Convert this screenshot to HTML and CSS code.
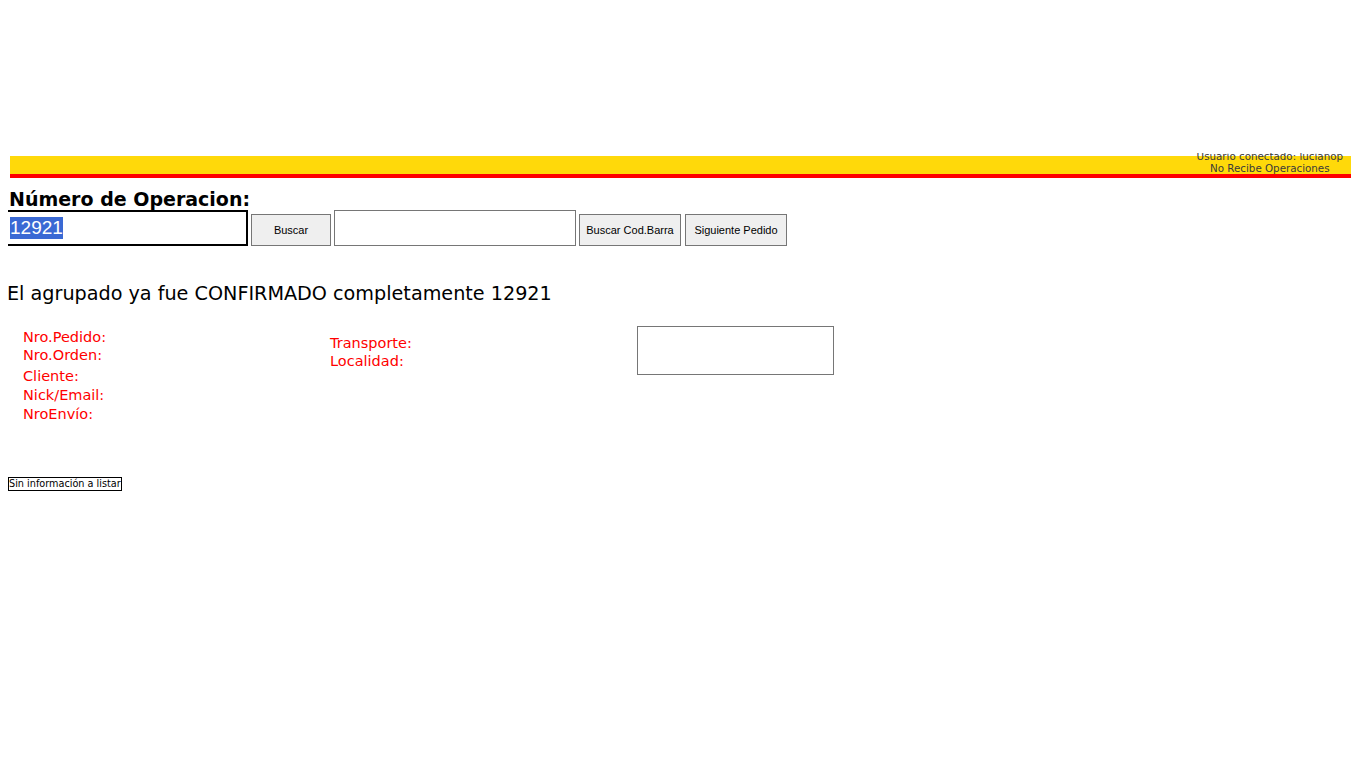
FILE: index.html
```html
<!DOCTYPE html>
<html lang="es">
<head>
<meta charset="utf-8">
<title>Operaciones</title>
<link rel="stylesheet" href="styles.css">
</head>
<body>
<div class="header">
  <div class="user-info">
    <div>Usuario conectado: lucianop</div>
    <div>No Recibe Operaciones</div>
  </div>
</div>
<h2 class="op-title">Número de Operacion:</h2>
<div class="search-row">
  <div class="op-input"><span class="sel">12921</span></div>
  <button class="btn btn-buscar">Buscar</button>
  <input class="bar-input" type="text">
  <button class="btn btn-barra">Buscar Cod.Barra</button>
  <button class="btn btn-sig">Siguiente Pedido</button>
</div>
<div class="message">El agrupado ya fue CONFIRMADO completamente 12921</div>
<div class="details">
  <div class="col col-left">
    <div class="lbl l1">Nro.Pedido:</div>
    <div class="lbl l2">Nro.Orden:</div>
    <div class="lbl l3">Cliente:</div>
    <div class="lbl l4">Nick/Email:</div>
    <div class="lbl l5">NroEnvío:</div>
  </div>
  <div class="col col-mid">
    <div class="lbl">Transporte:</div>
    <div class="lbl">Localidad:</div>
  </div>
  <div class="note-box"></div>
</div>
<div class="empty-list">Sin información a listar</div>
</body>
</html>
```

FILE: styles.css
```css
html, body {
  margin: 0;
  padding: 0;
  background: #fff;
}
body {
  padding: 0 8px;
  font-family: "DejaVu Sans", Verdana, sans-serif;
  color: #000;
}
.header {
  margin: 153px 0 0 2px;
  width: 1341px;
  height: 21px;
  overflow: hidden;
  background: linear-gradient(#fff 0, #fff 3px, #ffd90a 3px, #ffd90a 100%);
  border-bottom: 4px solid #ff0000;
  display: flex;
  justify-content: flex-end;
  align-items: flex-end;
}
.user-info {
  font-size: 10.3px;
  line-height: 12px;
  color: #3a3a3a;
  text-align: center;
  margin-right: 8px;
  flex-shrink: 0;
}
.op-title {
  margin: 10px 0 0 1px;
  font-size: 19px;
  line-height: 22px;
  font-weight: bold;
}
.search-row {
  display: flex;
  align-items: flex-end;
  height: 36px;
}
.op-input {
  box-sizing: border-box;
  width: 240px;
  height: 36px;
  border: 2px solid #000;
  border-left: none;
  padding: 0 0 0 2px;
  display: flex;
  align-items: center;
  font-family: "Liberation Sans", Arial, sans-serif;
  font-size: 19px;
  background: #fff;
}
.sel {
  background: #3a69d4;
  color: #fff;
  line-height: 22px;
}
.bar-input {
  box-sizing: border-box;
  width: 242px;
  height: 36px;
  margin: 0 0 0 3px;
  border: 1px solid #767676;
  padding: 0;
  background: #fff;
}
.btn {
  box-sizing: border-box;
  height: 32px;
  margin: 0 0 0 3px;
  padding: 0;
  border: 1px solid #767676;
  background: #efefef;
  font-family: "Liberation Sans", Arial, sans-serif;
  font-size: 11px;
  color: #000;
}
.btn-buscar { width: 80px; }
.btn-barra { width: 102px; }
.btn-sig { width: 102px; margin-left: 4px; }
.message {
  margin: 37px 0 0 -1px;
  font-size: 19.2px;
  line-height: 22px;
}
.details {
  display: flex;
  margin-top: 20px;
  height: 107px;
}
.col {
  font-size: 14.5px;
  color: #ff0000;
}
.lbl {
  line-height: 18px;
}
.col-left {
  margin-left: 15px;
  width: 307px;
  padding-top: 3px;
}
.col-left .l3 { margin-top: 3px; }
.col-left .l4 { margin-top: 1px; }
.col-left .l5 { margin-top: 1px; }
.col-mid {
  width: 307px;
  padding-top: 9px;
}
.note-box {
  box-sizing: border-box;
  width: 197px;
  height: 49px;
  border: 1px solid #767676;
  margin-top: 1px;
}
.empty-list {
  display: inline-block;
  margin-top: 45px;
  border: 1px solid #000;
  font-size: 9.7px;
  line-height: 12px;
  padding: 0;
}
```
